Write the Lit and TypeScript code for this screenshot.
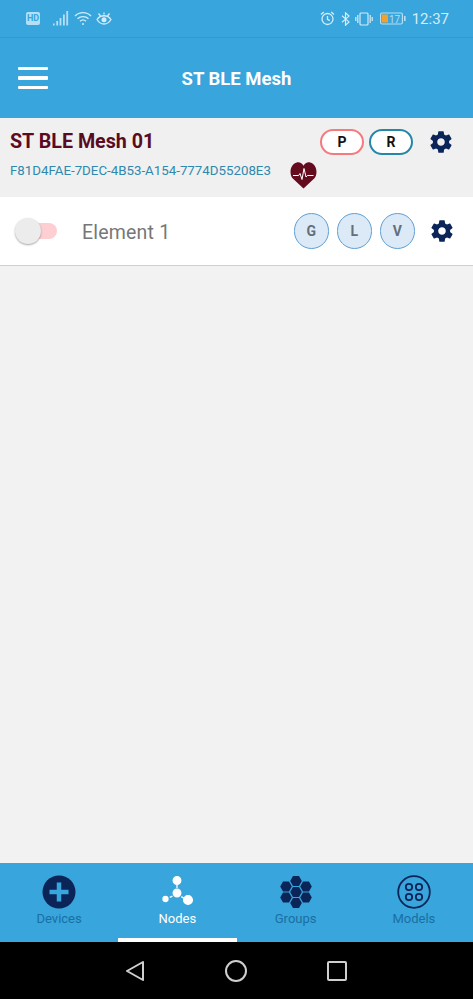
import { LitElement, html, css, svg } from 'lit';
import { customElement } from 'lit/decorators.js';

const GEAR = svg`<path d="M19.43 12.98c.04-.32.07-.64.07-.98s-.03-.66-.07-.98l2.11-1.65c.19-.15.24-.42.12-.64l-2-3.46c-.12-.22-.39-.3-.61-.22l-2.49 1c-.52-.4-1.08-.73-1.69-.98l-.38-2.65C14.46 2.18 14.25 2 14 2h-4c-.25 0-.46.18-.49.42l-.38 2.65c-.61.25-1.17.59-1.69.98l-2.49-1c-.23-.09-.49 0-.61.22l-2 3.46c-.13.22-.07.49.12.64l2.11 1.65c-.04.32-.07.65-.07.98s.03.66.07.98l-2.11 1.65c-.19.15-.24.42-.12.64l2 3.46c.12.22.39.3.61.22l2.49-1c.52.4 1.08.73 1.69.98l.38 2.65c.03.24.24.42.49.42h4c.25 0 .46-.18.49-.42l.38-2.65c.61-.25 1.17-.59 1.69-.98l2.49 1c.23.09.49 0 .61-.22l2-3.46c.12-.22.07-.49-.12-.64l-2.11-1.65zM12 15.5c-1.93 0-3.5-1.57-3.5-3.5s1.57-3.5 3.5-3.5 3.5 1.57 3.5 3.5-1.57 3.5-3.5 3.5z"/>`;

@customElement('app-root')
export class AppRoot extends LitElement {
  static styles = css`
    :host {
      display: flex;
      flex-direction: column;
      height: 999px;
      background: #f2f2f2;
      font-family: Roboto, 'Liberation Sans', sans-serif;
    }

    .status {
      height: 38px;
      flex: none;
      box-sizing: border-box;
      background: #38a5dc;
      border-bottom: 1px solid #3299cf;
      display: flex;
      align-items: center;
      padding: 0 24px 0 26px;
      color: #d5ecf8;
    }

    .status svg {
      display: block;
      flex: none;
    }

    .hd {
      width: 14px;
      height: 13px;
      border-radius: 2px;
      background: #b5dff5;
      color: #38a5dc;
      font-size: 9px;
      font-weight: 700;
      line-height: 13px;
      text-align: center;
      margin-right: 13px;
    }

    .spacer {
      flex: 1;
    }

    .time {
      font-size: 15px;
      margin-left: 6px;
      color: #d5ecf8;
    }

    .header {
      height: 80px;
      flex: none;
      background: #38a5dc;
      display: grid;
      grid-template-columns: 1fr auto 1fr;
      align-items: center;
      padding: 0 18px;
      box-sizing: border-box;
    }

    .burger {
      width: 30px;
      display: flex;
      flex-direction: column;
      gap: 6px;
    }

    .burger span {
      height: 3.5px;
      background: #fff;
      border-radius: 1px;
    }

    .title {
      color: #fff;
      font-size: 18.5px;
      font-weight: 700;
      padding-top: 2px;
    }

    .node {
      height: 79px;
      flex: none;
      box-sizing: border-box;
      background: #f0f0f0;
      padding: 11px 19px 0 10px;
      display: grid;
      grid-template-columns: 1fr auto;
      position: relative;
    }

    .node-name {
      color: #5a0b1f;
      font-size: 19.7px;
      font-weight: 700;
      line-height: 26px;
    }

    .node-id {
      color: #2f88ae;
      font-size: 13.3px;
      line-height: 16px;
      margin-top: 8px;
      white-space: nowrap;
    }

    .node-left {
      display: flex;
      flex-direction: column;
    }

    .node-right {
      display: flex;
      align-items: flex-start;
      gap: 5px;
    }

    .pill {
      width: 44px;
      height: 26px;
      box-sizing: border-box;
      border-radius: 13px;
      background: #fff;
      border: 2.5px solid #f47a7e;
      color: #111;
      font-size: 14px;
      font-weight: 700;
      display: flex;
      align-items: center;
      justify-content: center;
    }

    .pill.r {
      border-color: #2487a8;
    }

    .gear {
      width: 26px;
      height: 26px;
      fill: #0b2559;
      display: block;
      flex: none;
    }

    .node-right .gear {
      margin-left: 10px;
    }

    .heart {
      position: absolute;
      left: 290px;
      top: 43px;
      width: 27px;
      height: 28px;
    }

    .element {
      height: 69px;
      flex: none;
      box-sizing: border-box;
      background: #fff;
      border-bottom: 1px solid #cfcfcf;
      display: flex;
      align-items: center;
      padding: 0 18px 0 15px;
    }

    .toggle {
      position: relative;
      width: 42px;
      height: 26px;
      flex: none;
      margin-right: 25px;
    }

    .toggle .track {
      position: absolute;
      left: 5px;
      right: 0;
      top: 5px;
      height: 16px;
      border-radius: 8px;
      background: #fdcfd2;
    }

    .toggle .thumb {
      position: absolute;
      left: 0;
      top: 0;
      width: 26px;
      height: 26px;
      border-radius: 50%;
      background: #ececec;
      box-shadow: 0 1px 2px rgba(0, 0, 0, 0.35);
    }

    .el-name {
      font-size: 19.5px;
      color: #777;
      flex: 1;
      letter-spacing: 0.2px;
      padding-top: 2px;
    }

    .round {
      width: 35.5px;
      height: 35.5px;
      box-sizing: border-box;
      border-radius: 50%;
      background: #dceaf7;
      border: 1px solid #5f9fd3;
      color: #636f7c;
      font-size: 14px;
      font-weight: 700;
      display: flex;
      align-items: center;
      justify-content: center;
      margin-right: 7.5px;
    }

    .element .gear {
      margin-left: 6.5px;
    }

    .fill {
      flex: 1;
    }

    .tabs {
      height: 79px;
      flex: none;
      background: #38a5dc;
      display: grid;
      grid-template-columns: repeat(4, 1fr);
    }

    .tab {
      display: flex;
      flex-direction: column;
      align-items: center;
      padding-top: 11px;
      box-sizing: border-box;
      color: #1a6fa3;
      font-size: 13px;
      line-height: 16px;
      border-bottom: 4px solid transparent;
    }

    .tab svg {
      width: 36px;
      height: 36px;
      display: block;
      margin-bottom: 1px;
    }

    .tab.on {
      color: #fff;
      border-bottom-color: #fff;
    }

    .nav {
      height: 57px;
      flex: none;
      background: #000;
      display: grid;
      grid-template-columns: 20px 20px 20px;
      justify-content: center;
      column-gap: 81px;
      align-items: center;
      padding-right: 4px;
      box-sizing: border-box;
    }

    .nav svg {
      display: block;
      width: 22px;
      height: 22px;
      fill: none;
      stroke: #cfcfcf;
      stroke-width: 2;
    }
  `;

  private statusLeft() {
    return html`
      <div class="hd">HD</div>
      <svg width="16" height="15" viewBox="0 0 16 15" fill="#b5dff5" style="margin-right:5px">
        <rect x="0" y="12.5" width="1.6" height="2" />
        <rect x="3.3" y="10" width="1.8" height="4.5" />
        <rect x="6.6" y="7" width="1.8" height="7.5" />
        <rect x="10" y="3.5" width="1.8" height="11" />
        <rect x="13.3" y="0" width="1.8" height="14.5" />
      </svg>
      <svg width="18" height="15" viewBox="0 0 18 15" fill="none" stroke="#d5ecf8" stroke-width="1.3" style="margin-right:4px">
        <path d="M1 5c4.500-4.500 11.500-4.500 16 0" />
        <path d="M3.500 7.800c3-3 8-3 11 0" />
        <path d="M6 10.300c1.700-1.600 4.300-1.600 6 0" />
        <circle cx="9" cy="13" r="1" fill="#d5ecf8" stroke="none" />
      </svg>
      <svg width="16" height="14" viewBox="0 0 16 14" fill="none" stroke="#d5ecf8" stroke-width="1.3">
        <path d="M1 7.500c3.500-5 10.500-5 14 0-3.500 6-10.500 6-14 0z" />
        <circle cx="8" cy="7.800" r="2.500" fill="#d5ecf8" stroke="none" />
        <path d="M2.500 1.500l2 2.500M13.500 1.500l-2 2.500M8 .5v2" />
      </svg>
    `;
  }

  private statusRight() {
    return html`
      <svg width="15" height="15" viewBox="0 0 15 15" fill="none" stroke="#d5ecf8" stroke-width="1.3" style="margin-right:6px">
        <circle cx="7.500" cy="8" r="5.500" />
        <path d="M7.500 5v3.300l2.200 1.300M1 3.500L3.800 1M14 3.500L11.200 1" />
      </svg>
      <svg width="9" height="14" viewBox="0 0 9 14" fill="none" stroke="#d5ecf8" stroke-width="1.2" style="margin-right:5px">
        <path d="M1 3.700l7 6.200-3.500 3.300V.8L8 4.100l-7 6.200" />
      </svg>
      <svg width="18" height="14" viewBox="0 0 18 14" fill="none" stroke="#d5ecf8" stroke-width="1.2" style="margin-right:7px">
        <rect x="5" y="1" width="8" height="12" rx="1" />
        <path d="M2.800 3v8M.8 5v4M15.200 3v8M17.200 5v4" />
      </svg>
      <svg width="26" height="13" viewBox="0 0 26 13" style="margin-right:0">
        <rect x=".6" y="1" width="21.800" height="11" rx="1.500" fill="none" stroke="#b5dff5" stroke-width="1.200" />
        <rect x="2" y="2.500" width="6" height="8" fill="#f2a12e" />
        <rect x="24" y="4" width="1.600" height="5" fill="#b5dff5" />
        <text x="9" y="10.500" font-size="10" fill="#b5dff5" font-family="Roboto, sans-serif">17</text>
      </svg>
      <span class="time">12:37</span>
    `;
  }

  private heart() {
    return html`<svg class="heart" viewBox="0 0 27 28">
      <path d="M13.500 27.500L2.800 17.500C-1.500 12.500.5 3 6.800 1.500c3-.6 5.300.8 6.700 3.200 1.400-2.400 3.700-3.800 6.700-3.200 6.300 1.500 8.300 11 4 16z" fill="#640c1e" />
      <path d="M3 14.500h5.500l1.500-2 2 6 2-11 2 8.500 1.500-1.500h6" fill="none" stroke="#fff" stroke-width="1" />
    </svg>`;
  }

  private tabIcon(name: string) {
    const navy = '#0b2559';
    switch (name) {
      case 'Devices':
        return html`<svg viewBox="0 0 36 36">
          <circle cx="18" cy="18" r="16.500" fill=${navy} />
          <path d="M18 8.500v19M8.500 18h19" stroke="#38a5dc" stroke-width="4.500" />
        </svg>`;
      case 'Nodes':
        return html`<svg viewBox="0 0 36 36" fill="#fff" stroke="#fff" stroke-width="1.300">
          <path d="M18 6v14M18 20l10 6M18 20L7 25" stroke-dasharray="3 2" />
          <circle cx="18" cy="6.500" r="3.800" />
          <circle cx="18" cy="19" r="3.800" />
          <circle cx="6.500" cy="25" r="2.500" />
          <circle cx="29" cy="26" r="4.400" />
        </svg>`;
      case 'Groups':
        return html`<svg viewBox="0 0 36 36" fill=${navy}>
          ${[
            [18, 18],
            [18, 7],
            [18, 29],
            [8, 12.5],
            [28, 12.5],
            [8, 23.5],
            [28, 23.5],
          ].map(
            ([x, y]) =>
              svg`<path transform="translate(${x} ${y})" d="M-5.800 0L-3-5.100H3L5.800 0 3 5.100H-3z" />`
          )}
        </svg>`;
      default:
        return html`<svg viewBox="0 0 36 36" fill="none" stroke=${navy}>
          <circle cx="18" cy="18" r="15.800" stroke-width="1.800" />
          <circle cx="13" cy="13" r="3.200" stroke-width="1.800" />
          <circle cx="23" cy="13" r="3.200" stroke-width="1.800" />
          <circle cx="13" cy="23" r="3.200" stroke-width="1.800" />
          <circle cx="23" cy="23" r="3.200" stroke-width="1.800" />
        </svg>`;
    }
  }

  render() {
    const tabs = ['Devices', 'Nodes', 'Groups', 'Models'];
    return html`
      <div class="status">
        ${this.statusLeft()}
        <div class="spacer"></div>
        ${this.statusRight()}
      </div>
      <div class="header">
        <div class="burger"><span></span><span></span><span></span></div>
        <div class="title">ST BLE Mesh</div>
        <div></div>
      </div>
      <div class="node">
        <div class="node-left">
          <div class="node-name">ST BLE Mesh 01</div>
          <div class="node-id">F81D4FAE-7DEC-4B53-A154-7774D55208E3</div>
        </div>
        <div class="node-right">
          <div class="pill">P</div>
          <div class="pill r">R</div>
          <svg class="gear" viewBox="0 0 24 24">${GEAR}</svg>
        </div>
        ${this.heart()}
      </div>
      <div class="element">
        <div class="toggle">
          <div class="track"></div>
          <div class="thumb"></div>
        </div>
        <div class="el-name">Element 1</div>
        <div class="round">G</div>
        <div class="round">L</div>
        <div class="round">V</div>
        <svg class="gear" viewBox="0 0 24 24">${GEAR}</svg>
      </div>
      <div class="fill"></div>
      <div class="tabs">
        ${tabs.map(
          (t) => html`<div class="tab ${t === 'Nodes' ? 'on' : ''}">${this.tabIcon(t)}${t}</div>`
        )}
      </div>
      <div class="nav">
        <svg viewBox="0 0 22 22"><path d="M19 2L3 11l16 9z" stroke-linejoin="round" /></svg>
        <svg viewBox="0 0 22 22"><circle cx="11" cy="11" r="10" /></svg>
        <svg viewBox="0 0 22 22"><rect x="2" y="2" width="18" height="18" rx="1" /></svg>
      </div>
    `;
  }
}
